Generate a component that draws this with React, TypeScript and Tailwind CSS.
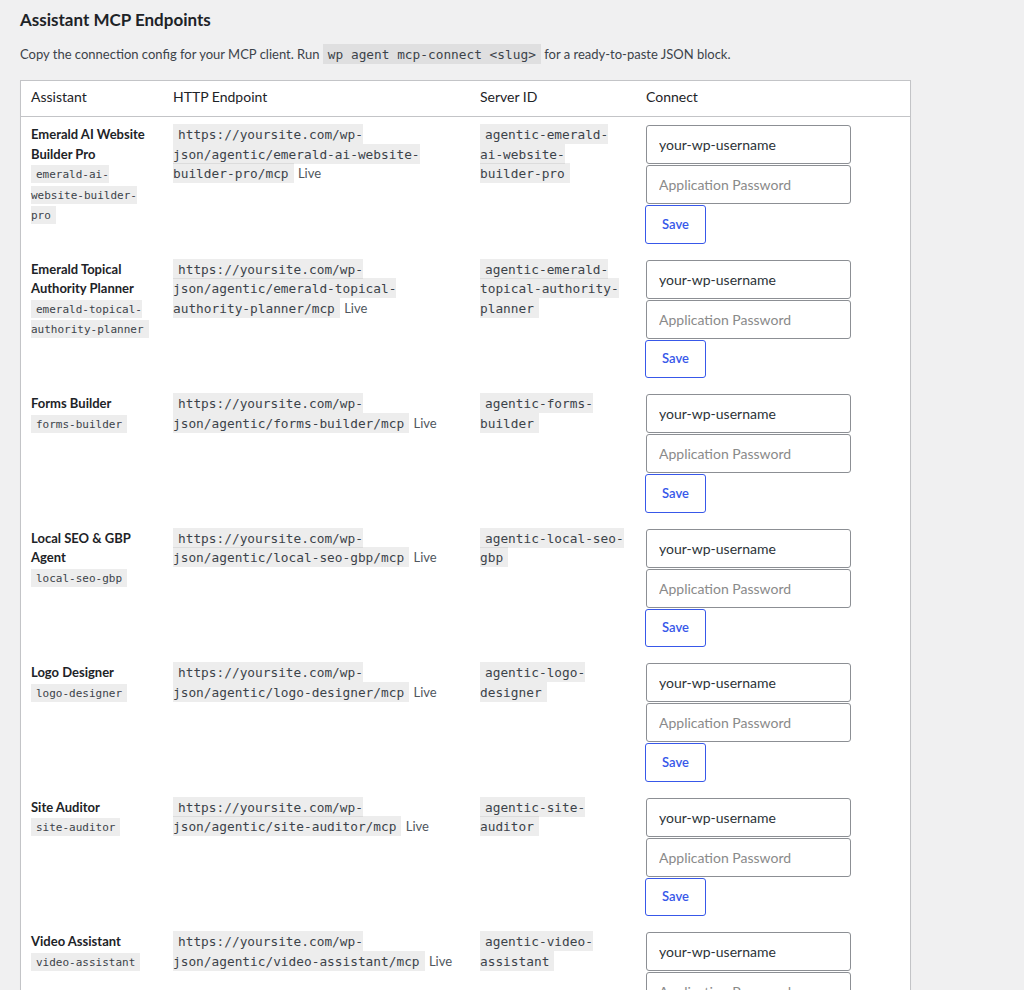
import React from "react";

const assistants = [
  { name: "Emerald AI Website Builder Pro", slug: "emerald-ai-website-builder-pro" },
  { name: "Emerald Topical Authority Planner", slug: "emerald-topical-authority-planner" },
  { name: "Forms Builder", slug: "forms-builder" },
  { name: "Local SEO & GBP Agent", slug: "local-seo-gbp" },
  { name: "Logo Designer", slug: "logo-designer" },
  { name: "Site Auditor", slug: "site-auditor" },
  { name: "Video Assistant", slug: "video-assistant" },
];

const mono = "font-['DejaVu_Sans_Mono',monospace]";

function Code({ children, small }: { children: React.ReactNode; small?: boolean }) {
  return (
    <code
      className={`${mono} bg-black/[0.07] px-[5px] pt-[3px] pb-[2px] ${
        small ? "text-[11px]" : "text-[12.8px]"
      } text-[#3c434a]`}
    >
      {children}
    </code>
  );
}

export default function App() {
  return (
    <div className="min-h-screen bg-[#f0f0f1] px-5 pt-[9px] pb-10 font-['Lato',sans-serif] text-[13px] text-[#3c434a]">
      <h2 className="text-[17px] leading-[22px] font-bold text-[#1d2327]">Assistant MCP Endpoints</h2>
      <p className="mt-[14px] leading-[19.5px]">
        Copy the connection config for your MCP client. Run <Code>wp agent mcp-connect &lt;slug&gt;</Code> for a
        ready-to-paste JSON block.
      </p>

      <table className="mt-[15px] w-[891px] border border-[#c3c4c7] bg-white border-separate border-spacing-0 shadow-[0_1px_1px_rgba(0,0,0,0.04)]">
        <thead>
          <tr className="text-left text-[14px] leading-[19.6px] text-[#1d2327]">
            <th className="w-[142px] px-[10px] pt-[6px] pb-[10px] font-normal border-b border-[#c3c4c7]">Assistant</th>
            <th className="w-[307px] px-[10px] pt-[6px] pb-[10px] font-normal border-b border-[#c3c4c7]">HTTP Endpoint</th>
            <th className="w-[166px] px-[10px] pt-[6px] pb-[10px] font-normal border-b border-[#c3c4c7]">Server ID</th>
            <th className="px-[10px] pt-[6px] pb-[10px] font-normal border-b border-[#c3c4c7]">Connect</th>
          </tr>
        </thead>
        <tbody>
          {assistants.map((a) => (
            <tr key={a.slug} className="align-top leading-[19.5px]">
              <td className="px-[10px] py-2">
                <div className="font-bold text-[#1d2327]">{a.name}</div>
                <Code small>{a.slug}</Code>
              </td>
              <td className="px-[10px] py-2">
                <Code>{`https://yoursite.com/wp-json/agentic/${a.slug}/mcp`}</Code>{" "}
                <span className="ml-px text-[13px] text-[#50575e]">Live</span>
              </td>
              <td className="px-[10px] py-2">
                <Code>{`agentic-${a.slug}`}</Code>
              </td>
              <td className="px-[10px] py-2">
                <div className="flex flex-col items-start gap-px">
                  <input
                    type="text"
                    defaultValue="your-wp-username"
                    className="w-[205px] h-[39px] rounded-[3px] border border-[#8c8f94] bg-white px-3 text-[14px] text-[#2c3338] outline-none"
                  />
                  <input
                    type="password"
                    placeholder="Application Password"
                    className="w-[205px] h-[39px] rounded-[3px] border border-[#8c8f94] bg-white px-3 text-[14px] text-[#2c3338] placeholder:text-[#8a8a8a] outline-none"
                  />
                  <button className="-ml-px h-[38.5px] w-[61px] rounded-[3px] border border-[#3858e9] bg-white text-[13px] font-semibold text-[#3858e9]">
                    Save
                  </button>
                </div>
              </td>
            </tr>
          ))}
        </tbody>
      </table>
    </div>
  );
}
